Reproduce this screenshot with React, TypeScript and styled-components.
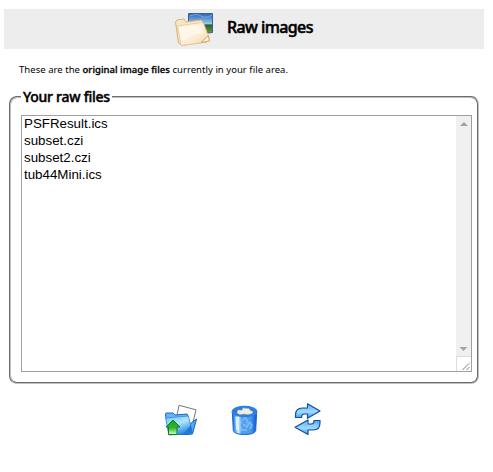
import React from "react";
import styled, { createGlobalStyle } from "styled-components";

const GlobalStyle = createGlobalStyle`
  * { box-sizing: border-box; }
  body { margin: 0; background: #fff; color: #000; font-family: "Noto Sans", sans-serif; }
`;

const Page = styled.main`
  width: 493px;
  height: 472px;
  padding: 9px 9px 0 4px;
  overflow: hidden;
`;

const Header = styled.header`
  display: flex;
  align-items: flex-start;
  height: 40px;
  padding-left: 170px;
  gap: 11px;
  background: #ededed;
`;

const Title = styled.h1`
  margin: 0;
  padding-top: 7px;
  font-size: 16px;
  line-height: 22px;
  font-weight: 500;
  letter-spacing: -0.6px;
  white-space: nowrap;
  -webkit-text-stroke: 0.5px #000;
`;

const Intro = styled.p`
  margin: 0;
  height: 47px;
  padding: 13px 0 0 15px;
  font-size: 9.5px;
  line-height: 16px;
  letter-spacing: 0.04px;
  white-space: nowrap;
`;

const Strong = styled.b`
  font-weight: 500;
  -webkit-text-stroke: 0.3px #000;
`;

const Files = styled.fieldset`
  width: 470px;
  height: 297px;
  margin: -9px 0 0 5px;
  padding: 0 0 0 10px;
  border: 2px groove #c0c0c0;
  border-radius: 8px;
`;

const Legend = styled.legend`
  padding: 0 2px;
  height: 20px;
  font-size: 14px;
  line-height: 20px;
  font-weight: 500;
  letter-spacing: -0.25px;
  white-space: nowrap;
  -webkit-text-stroke: 0.45px #000;
`;

const ListBox = styled.div`
  display: flex;
  width: 451px;
  height: 257px;
  margin-top: 8px;
  border: 1px solid #a0a0a0;
`;

const List = styled.ul`
  flex: 1;
  margin: -1px 0 0;
  padding: 0 2px;
  list-style: none;
  font: 13.33px/17px "Liberation Sans", Arial, sans-serif;
`;

const ScrollBar = styled.div`
  display: flex;
  flex-direction: column;
  align-items: center;
  justify-content: space-between;
  width: 15px;
  background: #f0f0f0;
`;

const UpArrow = styled.svg`
  display: block;
  margin-top: 6px;
`;

const DownArrow = styled.svg`
  display: block;
  margin-bottom: 5px;
`;

const Grip = styled.svg`
  display: block;
  background: #fff;
`;

const Actions = styled.nav`
  display: flex;
  padding: 19px 0 0 160px;
  gap: 32px;
`;

const Action = styled.button`
  width: 32px;
  height: 33px;
  padding: 0;
  border: 0;
  background: none;
  svg { display: block; overflow: visible; }
`;

const FolderPictureIcon = () => (
  <svg width="42" height="40" viewBox="0 0 42 40">
    <defs>
      <linearGradient id="sky" x2="0" y2="1">
        <stop stopColor="#2860bd" /><stop offset=".5" stopColor="#92c9e6" />
        <stop offset=".58" stopColor="#305d35" /><stop offset="1" stopColor="#61a33b" />
      </linearGradient>
      <linearGradient id="cream" x2="1" y2="1">
        <stop stopColor="#fff6e4" /><stop offset=".6" stopColor="#fcecd2" /><stop offset="1" stopColor="#efd3a4" />
      </linearGradient>
    </defs>
    <path d="M14.5 4.5h24v19l-9 1-15-5z" fill="url(#sky)" stroke="#3d5f92" />
    <path d="M16 7q7-3 11 0t11-1" fill="none" stroke="#6facdf" />
    <path d="M1.5 13 3 11l7-1 2 3 15-2 2 2 2 20-23 3.5L4.5 34z" fill="#f8e5c4" stroke="#dab27a" />
    <path d="M3.5 17 28 13.5l2 2 5 13.5-2 4-26 3.5z" fill="url(#cream)" stroke="#e4c794" strokeWidth=".8" />
    <path d="M5 19 27 15.5l2 9q-9 0-14 4T7 31z" fill="#fffaf1" opacity=".7" />
    <path d="m27 33.5 7.5-7 .8 5.5z" fill="#fff6df" stroke="#d3a35b" />
  </svg>
);

const UploadIcon = () => (
  <svg width="32" height="32" viewBox="0 0 32 32">
    <defs>
      <linearGradient id="folder" x2="0.5" y2="1">
        <stop stopColor="#6dc3ff" /><stop offset=".5" stopColor="#b2e4ff" /><stop offset="1" stopColor="#208ce9" />
      </linearGradient>
      <linearGradient id="green" x2="0" y2="1">
        <stop stopColor="#15a51a" /><stop offset=".55" stopColor="#35b52e" /><stop offset="1" stopColor="#d8ffd0" />
      </linearGradient>
    </defs>
    <path d="m15 1.3 17 4.5-5 21L11 22z" fill="#fff" stroke="#777" />
    <path d="m26 20 6.5-5-4 15-6 .5z" fill="#4aadf5" stroke="#1761b8" />
    <path d="M1.5 11 2 9h7l2 2 12-1 1 2 3 16-2 2.5H5z" fill="#65b6f8" stroke="#1767bd" />
    <path d="m1.5 14 23-2 4 17.5L5 31z" fill="url(#folder)" stroke="#327fca" strokeWidth=".7" />
    <path d="m19 30 8-9 1.5 9z" fill="#2378dc" />
    <path d="m9 16 7 7h-3v7.5H4.5V23H2z" fill="url(#green)" stroke="#137c1b" />
  </svg>
);

const TrashIcon = () => (
  <svg width="32" height="32" viewBox="0 0 32 32">
    <defs>
      <linearGradient id="can">
        <stop stopColor="#1769dc" /><stop offset=".16" stopColor="#76bbfa" /><stop offset=".25" stopColor="#d8efff" />
        <stop offset=".38" stopColor="#539ff0" /><stop offset=".75" stopColor="#4e9bec" /><stop offset="1" stopColor="#0758cf" />
      </linearGradient>
    </defs>
    <path d="M4.3 7 5.3 26.5q1 4 11.2 4t11.2-4l1-19.5" fill="url(#can)" stroke="#1963d0" />
    <ellipse cx="16.5" cy="7.5" rx="11.8" ry="4.8" fill="#3b79be" stroke="#2b7fec" strokeWidth="2" />
    <path d="m9 9 1-3 4 .3 1-2.3 4 .5 2 0 1 2 3 1-1 2-4 1-4-.5-4 .5z" fill="#efefe6" stroke="#b4b9b2" strokeWidth=".6" />
    <path d="m14 16 3-2 3 3m1 1 3 3-2 4m-3 1h-6l-1-4m0-2 2-3m1 3 4 3 2-4-3-1" fill="none" stroke="#9bcdf6" strokeWidth="2" opacity=".55" />
    <path d="m8.5 13 .8 13" stroke="#e9f7ff" strokeWidth="2.4" opacity=".85" />
  </svg>
);

const RefreshIcon = () => (
  <svg width="32" height="33" viewBox="0 0 32 33">
    <defs>
      <linearGradient id="refresh" x2="0" y2="1">
        <stop stopColor="#3c9df4" /><stop offset=".55" stopColor="#a2dbff" /><stop offset="1" stopColor="#379bf2" />
      </linearGradient>
    </defs>
    <g fill="url(#refresh)" stroke="#174f9d" strokeWidth="1.2" strokeLinejoin="round">
      <path d="M3.5 14.5V12q0-7 7-7h5V.8L28 8 15.5 15.3V11h-3q-3 0-3 3.5z" />
      <path d="M28 17.5V20q0 7-7 7h-5v4.6L3 24.3 16 17v4h3q3 0 3-3.5z" />
    </g>
    <path d="M5.5 12q1-5 6-5h5V3l7 5M8 24l7-5v3.5h6q3 0 4-3" fill="none" stroke="#9cdaff" opacity=".6" />
  </svg>
);

const files = ["PSFResult.ics", "subset.czi", "subset2.czi", "tub44Mini.ics"];

export default function App() {
  return (
    <>
      <GlobalStyle />
      <Page>
        <Header><FolderPictureIcon /><Title>Raw images</Title></Header>
        <Intro>These are the <Strong>original image files</Strong> currently in your file area.</Intro>
        <Files>
          <Legend>Your raw files</Legend>
          <ListBox>
            <List>{files.map((file) => <li key={file}>{file}</li>)}</List>
            <ScrollBar>
              <UpArrow width="8" height="4" viewBox="0 0 8 4"><path d="m0 4 4-4 4 4z" fill="#a3a3a3" /></UpArrow>
              <div>
                <DownArrow width="15" height="4" viewBox="0 0 15 4"><path d="m3.5 0 4 4 4-4z" fill="#a3a3a3" /></DownArrow>
                <Grip width="15" height="15" viewBox="0 0 15 15">
                  <path d="M0 .5h15M.5 0v15" stroke="#dcdcdc" />
                  <path d="m6.5 14 7-7m-3 7 3-3" stroke="#555" strokeDasharray="1.1 .4" />
                </Grip>
              </div>
            </ScrollBar>
          </ListBox>
        </Files>
        <Actions>
          <Action aria-label="Upload"><UploadIcon /></Action>
          <Action aria-label="Delete"><TrashIcon /></Action>
          <Action aria-label="Refresh"><RefreshIcon /></Action>
        </Actions>
      </Page>
    </>
  );
}
